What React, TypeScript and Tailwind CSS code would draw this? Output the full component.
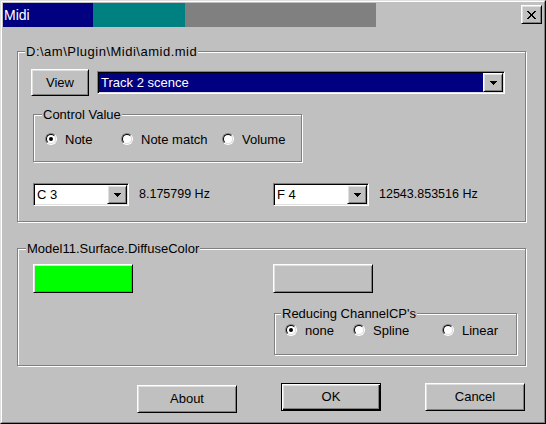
import React from "react";

const raised =
  "border border-t-white border-l-white border-r-black border-b-black shadow-[inset_1px_1px_0_#dfdfdf,inset_-1px_-1px_0_#808080]";
const sunken =
  "border border-t-[#808080] border-l-[#808080] border-r-white border-b-white shadow-[inset_1px_1px_0_#000,inset_-1px_-1px_0_#dfdfdf]";
const etched = "border border-[#808080] shadow-[inset_1px_1px_0_#fff,1px_1px_0_#fff]";

function Arrow() {
  return (
    <svg width="7" height="4" viewBox="0 0 7 4" shapeRendering="crispEdges">
      <rect x="0" y="0" width="7" height="1" fill="#000" />
      <rect x="1" y="1" width="5" height="1" fill="#000" />
      <rect x="2" y="2" width="3" height="1" fill="#000" />
      <rect x="3" y="3" width="1" height="1" fill="#000" />
    </svg>
  );
}

function CloseGlyph() {
  const px: [number, number][] = [];
  const rows = [
    "XX.....XX",
    ".XX...XX.",
    "..XX.XX..",
    "...XXX...",
    "...XXX...",
    "..XX.XX..",
    ".XX...XX.",
    "XX.....XX",
  ];
  rows.forEach((r, y) => r.split("").forEach((c, x) => c === "X" && px.push([x, y])));
  return (
    <svg width="9" height="8" viewBox="0 0 9 8" shapeRendering="crispEdges">
      {px.map(([x, y]) => (
        <rect key={`${x}-${y}`} x={x} y={y} width="1" height="1" fill="#000" />
      ))}
    </svg>
  );
}

function Radio({ checked, label }: { checked?: boolean; label: string }) {
  return (
    <div className="flex items-center h-[12px] gap-[8px]">
      <div className="w-[12px] h-[12px] shrink-0 rounded-full border border-t-[#808080] border-l-[#808080] border-r-white border-b-white">
        <div className="w-full h-full rounded-full border border-t-black border-l-black border-r-[#dfdfdf] border-b-[#dfdfdf] bg-white flex items-center justify-center">
          {checked && <div className="w-[4px] h-[4px] rounded-full bg-black" />}
        </div>
      </div>
      <span className="leading-[15px] whitespace-nowrap">{label}</span>
    </div>
  );
}

function Combo({
  text,
  selected,
  className,
}: {
  text: string;
  selected?: boolean;
  className: string;
}) {
  return (
    <div className={`${sunken} ${className} p-px flex`}>
      <div
        className={`flex-1 flex items-center pl-[2px] leading-[15px] ${
          selected ? "bg-[#000080] text-white" : "bg-white text-black"
        }`}
      >
        {text}
      </div>
      <div className={`${raised} w-[20px] bg-[#c0c0c0] flex items-center justify-center`}>
        <Arrow />
      </div>
    </div>
  );
}

function Group({
  label,
  labelLeft,
  className,
  labelClass,
  children,
}: {
  label: string;
  labelLeft: string;
  className: string;
  labelClass?: string;
  children?: React.ReactNode;
}) {
  return (
    <div className={`relative ${etched} ${className}`}>
      <span
        className={`absolute top-[-8px] ${labelLeft} px-[1px] bg-[#c0c0c0] leading-[15px] whitespace-nowrap ${
          labelClass ?? ""
        }`}
      >
        {label}
      </span>
      {children}
    </div>
  );
}

export default function App() {
  return (
    <div className="w-[546px] h-[424px] bg-[#c0c0c0] border border-t-[#dfdfdf] border-l-[#dfdfdf] border-r-black border-b-black font-['Liberation_Sans',Arial,sans-serif] text-[13px] text-black">
      <div className="h-full border border-t-white border-l-white border-r-[#808080] border-b-[#808080] p-px flex flex-col">
        {/* Title bar */}
        <div className="h-[24px] flex items-start shrink-0">
          <div className="w-[90px] h-full bg-[#000080] text-white text-[14px] leading-[24px] pl-[1px]">
            Midi
          </div>
          <div className="w-[92px] h-full bg-[#008080]" />
          <div className="w-[191px] h-full bg-[#808080]" />
          <div className="flex-1" />
          <div
            className={`${raised} mt-[2px] mr-[1px] w-[21px] h-[19px] flex items-center justify-center`}
          >
            <CloseGlyph />
          </div>
        </div>

        {/* Group 1 */}
        <Group
          label="D:\am\Plugin\Midi\amid.mid"
          labelLeft="left-[7px]"
          labelClass="tracking-[0.5px]"
          className="mt-[24px] ml-[14px] w-[509px] h-[171px] shrink-0 flex flex-col"
        >
          <div className="mt-[17px] ml-[13px] flex items-center">
            <div className={`${raised} w-[58px] h-[27px] flex items-center justify-center`}>
              View
            </div>
            <Combo text="Track 2 scence" selected className="ml-[8px] w-[408px] h-[23px]" />
          </div>

          <Group
            label="Control Value"
            labelLeft="left-[8px]"
            className="mt-[18px] ml-[15px] w-[269px] h-[48px] shrink-0"
          >
            <div className="mt-[18px] ml-[11px] flex">
              <div className="w-[76px]">
                <Radio checked label="Note" />
              </div>
              <div className="w-[101px]">
                <Radio label="Note match" />
              </div>
              <Radio label="Volume" />
            </div>
          </Group>

          <div className="mt-[21px] ml-[15px] flex items-center">
            <div className="w-[240px] flex items-center">
              <Combo text="C 3" className="w-[96px] h-[23px]" />
              <span className="ml-[10px] text-[12.5px]">8.175799 Hz</span>
            </div>
            <div className="flex items-center">
              <Combo text="F 4" className="w-[96px] h-[23px]" />
              <span className="ml-[10px] text-[12.5px]">12543.853516 Hz</span>
            </div>
          </div>
        </Group>

        {/* Group 2 */}
        <Group
          label="Model11.Surface.DiffuseColor"
          labelLeft="left-[8px]"
          className="mt-[26px] ml-[14px] w-[509px] h-[118px] shrink-0"
        >
          <div className="mt-[15px] ml-[15px] flex items-start">
            <div className={`${raised} w-[100px] h-[29px] bg-[#00ff00]`} />
            <div className="ml-[140px] flex flex-col">
              <div className={`${raised} w-[100px] h-[29px]`} />
              <Group
                label="Reducing ChannelCP's"
                labelLeft="left-[6px]"
                className="mt-[20px] ml-[1px] w-[243px] h-[42px]"
              >
                <div className="mt-[10px] ml-[10px] flex">
                  <div className="w-[68px]">
                    <Radio checked label="none" />
                  </div>
                  <div className="w-[89px]">
                    <Radio label="Spline" />
                  </div>
                  <Radio label="Linear" />
                </div>
              </Group>
            </div>
          </div>
        </Group>

        {/* Buttons */}
        <div className="mt-[17px] ml-[134px] flex items-start gap-[44px]">
          <div className={`${raised} mt-[2px] w-[100px] h-[28px] flex items-center justify-center`}>
            About
          </div>
          <div className="border border-black w-[100px] h-[28px] shadow-[inset_1px_1px_0_#fff,inset_-1px_-1px_0_#000,inset_-2px_-2px_0_#808080,inset_2px_2px_0_#dfdfdf] flex items-center justify-center">
            OK
          </div>
          <div className={`${raised} w-[100px] h-[28px] flex items-center justify-center`}>
            Cancel
          </div>
        </div>
      </div>
    </div>
  );
}
